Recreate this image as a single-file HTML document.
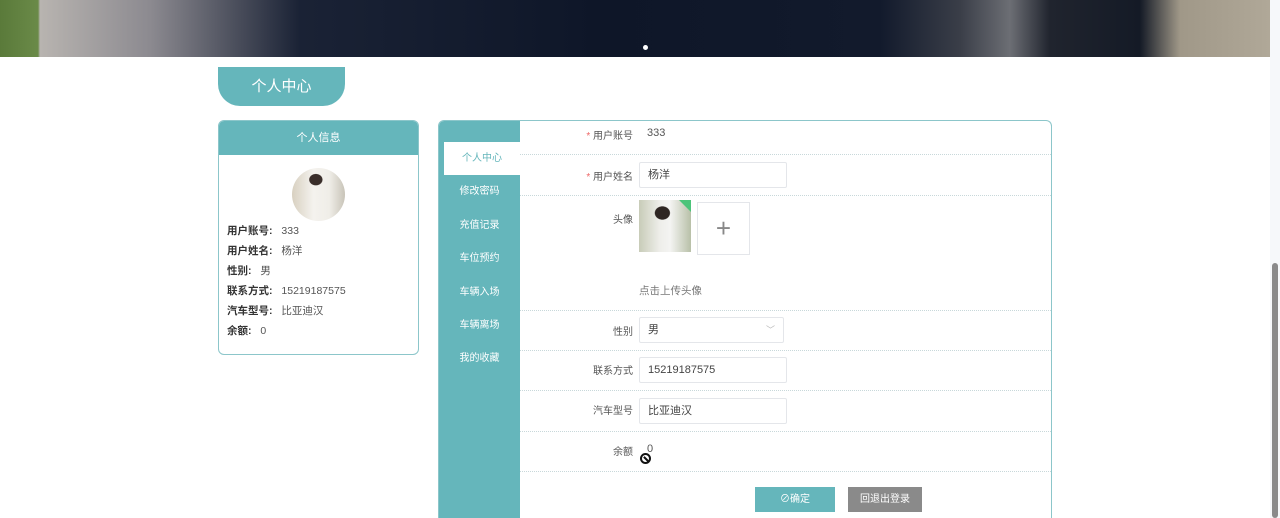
<!DOCTYPE html>
<html><head><meta charset="utf-8"><style>
*{margin:0;padding:0;box-sizing:border-box}
html,body{width:1280px;height:518px;overflow:hidden}
body{background:#fff;font-family:"Liberation Sans","Noto Sans CJK SC",sans-serif;font-size:11px;color:#555;position:relative}
.banner{position:absolute;left:0;top:0;width:1270px;height:57px;background:linear-gradient(90deg,#5a7a3a 0,#6a8a48 38px,#b8b4b0 40px,#8c8a90 150px,#1a2235 300px,#0e1628 600px,#121a2c 880px,#3a3e48 960px,#6c6e74 1010px,#20242e 1050px,#141a26 1140px,#a09888 1180px,#b0a898 1270px)}
.dot{position:absolute;left:643px;top:45px;width:5px;height:5px;border-radius:50%;background:#fff}
.sb{position:absolute;left:1270px;top:0;width:10px;height:518px;background:#f6f8fa}
.thumb{position:absolute;left:1272px;top:263px;width:6px;height:255px;background:#8a8a8a;border-radius:3px}
.tab{position:absolute;left:218px;top:67px;width:127px;height:39px;background:#65b6bb;border-radius:0 0 22px 22px;color:#fff;font-size:15px;text-align:center;line-height:40px}
.card{position:absolute;left:218px;top:120px;width:201px;height:235px;border:1px solid #8cc6ca;border-radius:6px;overflow:hidden}
.card .h{height:34px;background:#65b6bb;color:#fff;text-align:center;line-height:34px;font-size:11px}
.av{position:absolute;left:73px;top:47px;width:53px;height:53px;border-radius:50%;background:radial-gradient(ellipse 7px 6px at 45% 22%,#3a2e2a 0 90%,transparent 100%),linear-gradient(90deg,#d8d0c0,#f4f2ee 40%,#f0eee8 70%,#c8c4b8)}
.info{position:absolute;left:8px;top:100px;line-height:20px;font-size:10.5px}
.info b{color:#333;font-weight:bold;display:inline-block;margin-right:6px}
.panel{position:absolute;left:438px;top:120px;width:614px;height:398px;border:1px solid #8cc6ca;border-bottom:none;border-radius:6px 6px 0 0;overflow:hidden}
.side{position:absolute;left:0;top:0;width:81px;height:410px;background:#65b6bb}
.side div{height:33.4px;line-height:33px;text-align:center;color:#fff;font-size:10px}
.side .on{background:#fff;color:#65b6bb;margin-left:5px;margin-top:21px}
.row{position:absolute;left:81px;width:533px;border-bottom:1px dotted #c8d8da}
.lbl{position:absolute;width:113px;text-align:right;font-size:10px;color:#555}
.lbl i{color:#e66;font-style:normal}
.inp{position:absolute;left:200px;width:148px;height:26px;border:1px solid #e4e6ea;border-radius:2px;padding-left:8px;line-height:24px;font-size:11px;color:#444}
.btn{position:absolute;top:366px;height:25px;line-height:25px;color:#fff;font-size:10px;text-align:center}
</style></head><body>
<div class="banner"></div><div class="dot"></div>
<div class="sb"></div><div class="thumb"></div>
<div class="tab">个人中心</div>
<div class="card"><div class="h">个人信息</div><div class="av"></div>
<div class="info"><div><b>用户账号:</b> 333</div><div><b>用户姓名:</b> 杨洋</div><div><b>性别:</b> 男</div><div><b>联系方式:</b> 15219187575</div><div><b>汽车型号:</b> 比亚迪汉</div><div><b>余额:</b> 0</div></div></div>
<div class="panel">
<div class="side"><div class="on">个人中心</div><div>修改密码</div><div>充值记录</div><div>车位预约</div><div>车辆入场</div><div>车辆离场</div><div>我的收藏</div></div>
<div class="row" style="top:0;height:34px"><div class="lbl" style="top:6px"><i>*</i> 用户账号</div><div style="position:absolute;left:127px;top:6px">333</div></div>
<div class="row" style="top:34px;height:41px"><div class="lbl" style="top:13px"><i>*</i> 用户姓名</div><div class="inp" style="left:119px;top:7px">杨洋</div></div>
<div class="row" style="top:75px;height:115px"><div class="lbl" style="top:15px">头像</div>
<div style="position:absolute;left:119px;top:4px;width:52px;height:52px;background:radial-gradient(ellipse 8px 7px at 45% 25%,#2e2622 0 90%,transparent 100%),linear-gradient(90deg,#c8ccb8,#eeeeea 40%,#f4f4f2 60%,#b8c0a8)"></div>
<div style="position:absolute;left:159px;top:4px;width:0;height:0;border-top:12px solid #4cc47a;border-left:12px solid transparent"></div>
<div style="position:absolute;left:177px;top:6px;width:53px;height:53px;border:1px solid #e4e6ea;text-align:center;line-height:50px;font-size:26px;color:#888;font-weight:200">+</div>
<div style="position:absolute;left:119px;top:87px;font-size:10.5px;color:#777">点击上传头像</div></div>
<div class="row" style="top:190px;height:40px"><div class="lbl" style="top:12px">性别</div><div class="inp" style="left:119px;top:6px;width:145px">男<span style="position:absolute;right:8px;color:#bbb;font-size:9px">﹀</span></div></div>
<div class="row" style="top:230px;height:40px"><div class="lbl" style="top:11px">联系方式</div><div class="inp" style="left:119px;top:6px">15219187575</div></div>
<div class="row" style="top:270px;height:41px"><div class="lbl" style="top:11px">汽车型号</div><div class="inp" style="left:119px;top:7px">比亚迪汉</div></div>
<div class="row" style="top:311px;height:40px"><div class="lbl" style="top:11px">余额</div><div style="position:absolute;left:127px;top:11px">0</div><div style="position:absolute;left:120px;top:21px;width:11px;height:11px;border:2px solid #111;border-radius:50%"><div style="position:absolute;left:0.5px;top:2.5px;width:6px;height:2px;background:#111;transform:rotate(45deg)"></div></div></div>
<div class="btn" style="left:316px;width:80px;background:#65b6bb">⊘确定</div>
<div class="btn" style="left:409px;width:74px;background:#8a8a8a">回退出登录</div>
</div>
</body></html>
